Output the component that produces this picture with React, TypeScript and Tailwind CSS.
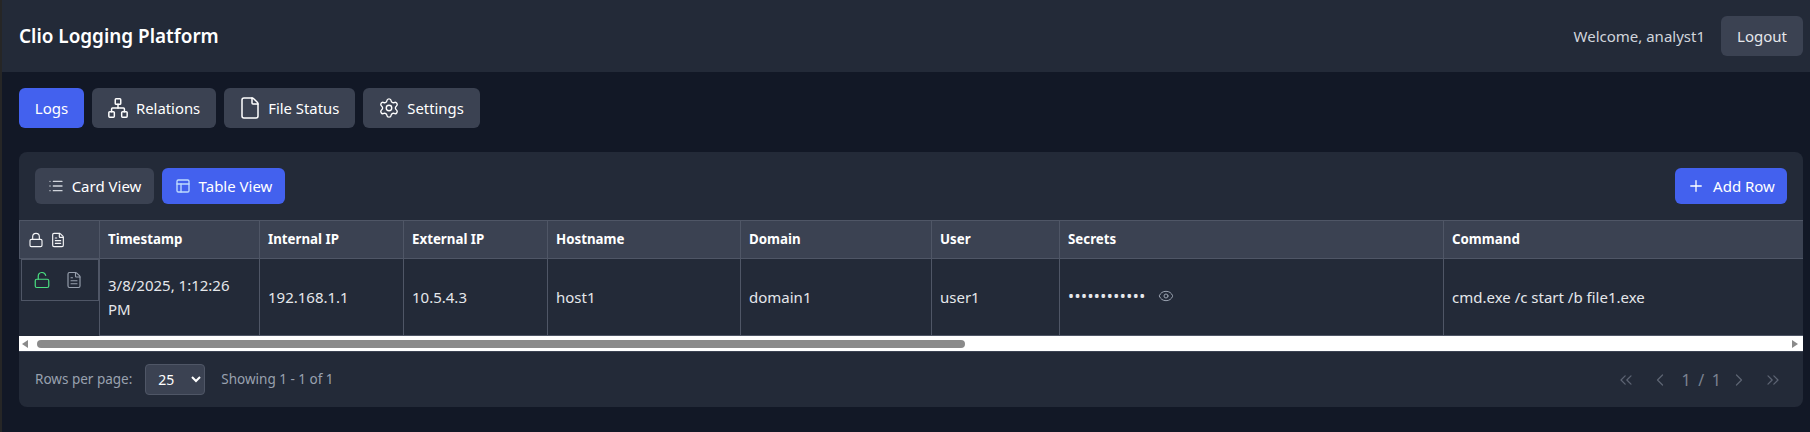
import { ChevronLeft, ChevronRight, ChevronsLeft, ChevronsRight, Eye, File, FileText, List, Lock, LockOpen, Network, PanelsTopLeft, Plus, Settings } from "lucide-react"

const columns = [
  { label: "Timestamp", width: "w-[160px]" },
  { label: "Internal IP", width: "w-[144px]" },
  { label: "External IP", width: "w-[144px]" },
  { label: "Hostname", width: "w-[193px]" },
  { label: "Domain", width: "w-[191px]" },
  { label: "User", width: "w-[128px]" },
  { label: "Secrets", width: "w-[384px]" },
  { label: "Command", width: "w-[400px]" },
]

const navItems = [
  { label: "Relations", icon: <Network className="w-[22px] h-[22px] -mx-px" strokeWidth={1.6} /> },
  { label: "File Status", icon: <File className="w-6 h-6 -mx-0.5" strokeWidth={1.5} /> },
  { label: "Settings", icon: <Settings className="w-[22px] h-[22px] -mx-px" strokeWidth={1.5} /> },
]

const cellText = ["3/8/2025, 1:12:26 PM", "192.168.1.1", "10.5.4.3", "host1", "domain1", "user1"]

export default function App() {
  return (
    <div className="min-h-[432px] bg-[#121826] font-['Noto_Sans',sans-serif] text-white border-l-2 border-[#262626] overflow-hidden">
      <header className="h-[72px] bg-[#232a38] flex items-center justify-between pl-[17px] pr-[7px]">
        <h1 className="text-[18.9px] font-semibold">Clio Logging Platform</h1>
        <div className="flex items-center gap-4">
          <span className="text-[15px] text-gray-300">Welcome, analyst1</span>
          <button className="h-10 w-[82px] rounded-md bg-[#3b4252] text-[15px] text-gray-200">Logout</button>
        </div>
      </header>

      <main className="pl-[17px] pr-[7px] pt-4">
        <nav className="flex gap-2 mb-6">
          <button className="h-10 w-[65px] rounded-md bg-[#4361ee] text-[15px]">Logs</button>
          {navItems.map((item) => (
            <button key={item.label} className="h-10 px-4 flex items-center gap-2 rounded-md bg-[#3b4252] text-[14.85px]">
              {item.icon}
              {item.label}
            </button>
          ))}
        </nav>

        <section className="bg-[#232a38] rounded-lg overflow-hidden">
          <div className="flex justify-between p-4">
            <div className="flex gap-2">
              <button className="h-9 w-[119px] flex items-center justify-center gap-2 rounded-md bg-[#3b4252] text-[15px]">
                <List className="w-4 h-4 text-gray-300" />
                Card View
              </button>
              <button className="h-9 w-[123px] flex items-center justify-center gap-2 rounded-md bg-[#4361ee] text-[15px]">
                <PanelsTopLeft className="w-4 h-4 text-blue-200" />
                Table View
              </button>
            </div>
            <button className="h-9 w-[112px] flex items-center justify-center gap-2 rounded-md bg-[#4361ee] text-[15px]">
              <Plus className="w-[18px] h-[18px]" strokeWidth={1.75} />
              Add Row
            </button>
          </div>

          <div className="overflow-hidden">
            <table className="table-fixed border-collapse w-[1824px] text-[15px]">
              <thead>
                <tr className="h-[38px] bg-[#3b4252] text-[13.3px]">
                  <th className="w-[80px] border border-[#4f5666] px-2">
                    <div className="flex items-center gap-[6px]">
                      <Lock className="w-4 h-4 text-gray-100" strokeWidth={1.75} />
                      <FileText className="w-4 h-4 text-gray-100" strokeWidth={1.75} />
                    </div>
                  </th>
                  {columns.map((col) => (
                    <th key={col.label} className={`${col.width} border border-[#4f5666] px-2 pt-px text-left font-bold`}>{col.label}</th>
                  ))}
                </tr>
              </thead>
              <tbody>
                <tr className="h-[77px] text-gray-200">
                  <td className="align-top p-0">
                    <div className="h-[42px] ml-[1px] pr-1 border border-[#4f5666] flex items-center justify-center gap-[14px]">
                      <LockOpen className="w-[18px] h-[18px] text-[#4ade80]" strokeWidth={1.6} />
                      <FileText className="w-[18px] h-[18px] text-gray-400" strokeWidth={1.5} />
                    </div>
                  </td>
                  {cellText.map((text) => (
                    <td key={text} className="border border-[#4f5666] px-2 leading-6">{text}</td>
                  ))}
                  <td className="border border-[#4f5666] px-2">
                    <div className="flex items-center gap-3 -mt-[2px]">
                      <span className="text-[16px] tracking-[0.45px]">••••••••••••</span>
                      <Eye className="w-4 h-4 text-gray-400" strokeWidth={1.5} />
                    </div>
                  </td>
                  <td className="border border-[#4f5666] px-2">cmd.exe /c start /b file1.exe</td>
                </tr>
              </tbody>
            </table>
          </div>

          <div className="h-[15px] bg-white flex items-center justify-between px-[3px]">
            <div className="flex items-center flex-1">
              <div className="w-0 h-0 border-y-[4px] border-y-transparent border-r-[6px] border-r-[#8a8a8a]" />
              <div className="ml-[9px] w-[928px] h-[8px] rounded-full bg-[#8a8a8a]" />
            </div>
            <div className="w-0 h-0 border-y-[4px] border-y-transparent border-l-[6px] border-l-[#8a8a8a] mr-[2px]" />
          </div>

          <div className="h-[56px] flex items-center justify-between pl-4 pr-[14px] border-t border-[#3b4252]">
            <div className="flex items-center text-[13.5px] text-gray-400">
              <span>Rows per page:</span>
              <select className="ml-[13px] mr-4 h-[31px] w-[60px] rounded border border-[#4f5666] bg-[#3b4252] pl-2 text-sm text-white" defaultValue="25">
                <option value="25">25</option>
              </select>
              <span>Showing 1 - 1 of 1</span>
            </div>
            <div className="flex items-center gap-[2px] text-[#5d6473]">
              <span className="w-8 h-8 flex items-center justify-center"><ChevronsLeft className="w-5 h-5" strokeWidth={1.5} /></span>
              <span className="w-8 h-8 flex items-center justify-center"><ChevronLeft className="w-5 h-5" strokeWidth={1.5} /></span>
              <span className="pl-[3px] text-[16px] text-[#7b8290] [word-spacing:3.5px]">1 / 1</span>
              <span className="w-8 h-8 flex items-center justify-center"><ChevronRight className="w-5 h-5" strokeWidth={1.5} /></span>
              <span className="w-8 h-8 flex items-center justify-center"><ChevronsRight className="w-5 h-5" strokeWidth={1.5} /></span>
            </div>
          </div>
        </section>
      </main>
    </div>
  )
}
